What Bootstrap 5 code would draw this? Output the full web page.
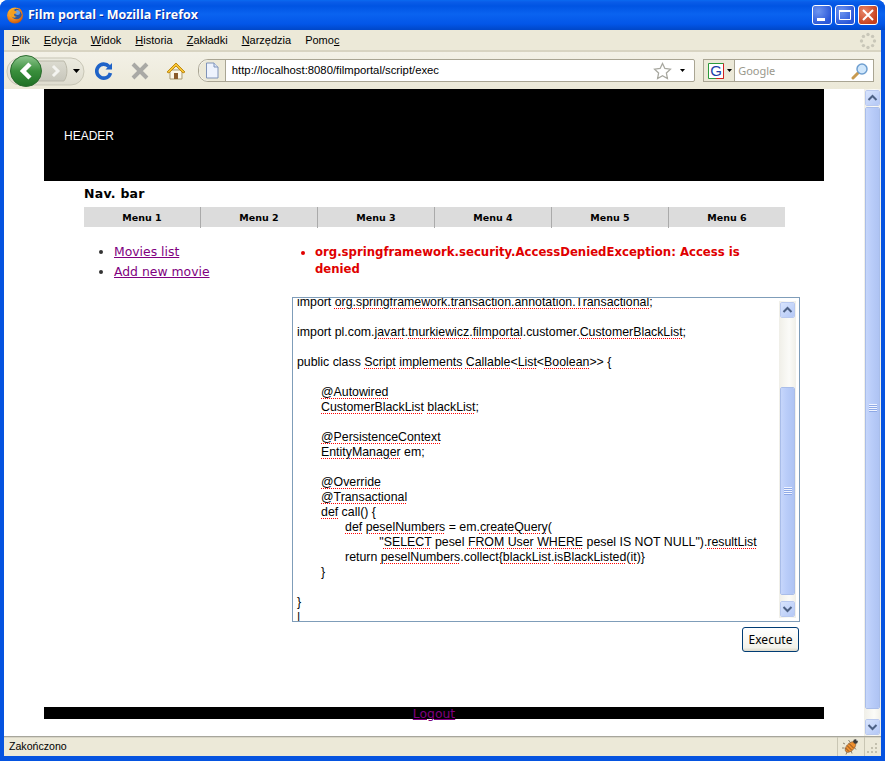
<!DOCTYPE html>
<html lang="pl">
<head>
<meta charset="utf-8">
<title>Film portal - Mozilla Firefox</title>
<link href="https://cdn.jsdelivr.net/npm/bootstrap@5.3.0/dist/css/bootstrap.min.css" rel="stylesheet">
<style>
html,body{margin:0;height:761px;overflow:hidden;background:#fff}
.xp-win{width:885px;height:761px;display:flex;flex-direction:column;background:#0553e0;border-radius:8px 8px 0 0;padding:0 4px 5px;overflow:hidden}
.xp-title{height:30px;margin:0 -4px;padding:0 7px 0 6px;flex:none;background:linear-gradient(#0a6af0 0,#0a5ce8 2px,#0054e3 6px,#0a63f0 14px,#0356e8 24px,#0047c8 30px);color:#fff;font:700 12.5px/30px "Open Sans","Liberation Sans",sans-serif;text-shadow:1px 1px 0 #0a2a9c}
.xp-wbtn{width:20px;height:20px;border:1px solid #fff;border-radius:3px;background:radial-gradient(circle at 30% 30%,#6f96f0,#2a57d8 75%);margin-left:3px}
.xp-wbtn.xp-x{background:radial-gradient(circle at 30% 30%,#e8876a,#c63f1c 75%)}
.xp-menu{height:22px;flex:none;background:#ece9d8;border-bottom:2px solid #d8d4c2;padding-left:8px;font:11px/21px "Liberation Sans",sans-serif;color:#000;gap:14px}
.xp-menu .xp-mi{padding:0}
.xp-menu u{text-decoration-thickness:1px}
.xp-tool{height:37px;flex:none;background:linear-gradient(#f3f1e7,#ece9d8);padding:0 7px 0 2px}
.xp-url,.xp-search{height:23px;background:#fff;border:1px solid #a9a593;font:11px/21px "Liberation Sans",sans-serif}
.xp-url{width:498px;margin-left:12px;border-radius:10px 2px 2px 10px}
.xp-url .xp-page{width:27px;height:21px;flex:none;background:#ece9d8;border-right:1px solid #a9a593;border-radius:10px 0 0 10px}
.xp-url .xp-addr{padding-left:6px;font-size:11.3px;color:#000}
.xp-search{width:171px;margin-left:8px}
.xp-search .xp-eng{width:31px;height:21px;flex:none;background:#ece9d8;border-right:1px solid #a9a593}
.xp-search .xp-hint{padding-left:3px;color:#9a988c;font:11px/21px "Noto Sans",sans-serif}
.xp-body{flex:1;min-height:0;background:#fff}
.xp-page-view{flex:1;min-width:0;overflow:hidden}
.xp-sb{width:17px;flex:none;background:linear-gradient(90deg,#f0efe8,#fbfbf8 60%,#f0efe8)}
.xp-sb-btn{height:16px;margin:1px;background:linear-gradient(135deg,#d8e4fd,#b4c8f6);border:1px solid #fff;border-radius:2px;outline:1px solid #b9c9ef;outline-offset:-1px}
.xp-sb-thumb{background:linear-gradient(90deg,#c6d6fb,#bacdf9 40%,#aec3f3);border:1px solid #fff;outline:1px solid #a9bde9;outline-offset:-1px;border-radius:2px;margin:0 1px}
.xp-sb-gap{height:9px}
.xp-grip{width:8px;height:8px;background:repeating-linear-gradient(#f0f4ff 0,#f0f4ff 1px,#8ea9e6 1px,#8ea9e6 2px)}
.xp-status{height:20px;flex:none;background:#ece9d8;border-top:1px solid #a7a69c;box-shadow:inset 0 1px 0 #d8d5c6;font:10.6px/19px "Liberation Sans",sans-serif;color:#000;padding-left:5px}
.xp-sep{width:27px;height:19px;border-left:1px solid #c9c6b4;flex:none}
.xp-sgrip{width:17px;height:19px;border-left:1px solid #c9c6b4;flex:none}
.fp-wrap{width:780px;margin:0 auto;font-family:"DejaVu Sans",sans-serif;color:#000}
.fp-head{height:92px;background:#000;color:#fff;padding-left:20px;font:12px/94px "Liberation Sans",sans-serif}
.fp-inner{padding:0 39px 0 40px}
.fp-navt{height:26px;font:700 12.5px/25px "DejaVu Sans",sans-serif;letter-spacing:.25px;margin:0}
.fp-menu{height:20px;background:#dcdcdc;font:700 9.5px/21px "DejaVu Sans",sans-serif;text-align:center}
.fp-menu .fp-mi{flex:1 1 0;border-right:1px solid #aaa;color:#000;padding:0}
.fp-menu .fp-mi:last-child{border-right:0}
.fp-main{margin-top:15px}
.fp-left{width:208px;flex:none}
.fp-links{margin:0;padding-left:30px;font-size:12.4px;line-height:20px;color:#333}
.fp-links a{color:#800080}
.fp-right{width:508px;flex:none}
.fp-err{margin:2px 0 19px;padding-left:23px;color:#e00000;font:700 11.7px/17px "DejaVu Sans",sans-serif;width:460px}
.fp-ta{height:325px;border:1px solid #7f9db9;background:#fff;overflow:hidden}
.fp-code{flex:1;min-width:0;overflow:hidden;padding-left:4px}
.fp-code pre{margin:-3px 0 0;font:12.35px/15px "Liberation Sans",sans-serif;color:#000;tab-size:7;overflow:visible;white-space:pre}
.sp{text-decoration:underline dotted #f00 1px;text-underline-offset:2px}
.fp-tsb{width:17px;flex:none;margin:3px 3px 3px 0;background:linear-gradient(90deg,#f0efe8,#fbfbf8 60%,#f0efe8)}
.fp-gap1{height:68px}
.fp-gap2{height:5px}
.fp-act{margin-top:5px;padding-right:1px}
.btn.fp-exec{width:57px;height:25px;padding:0;font:12px/23px "Noto Sans","Liberation Sans",sans-serif;color:#000;background:linear-gradient(#fff,#f3f2ea 85%,#dcd8c8);border:1px solid #003c74;border-radius:3px}
.fp-foot{height:12px;background:#000;margin-top:55px;text-align:center;font-size:12.4px;line-height:13px}
.fp-foot a{color:#800080}
</style>
</head>
<body>
<div class="xp-win">
  <div class="xp-title d-flex align-items-center">
    <svg width="18" height="18" viewBox="0 0 18 18" class="flex-none me-1"><defs><radialGradient id="fx" cx=".4" cy=".3" r=".8"><stop offset="0" stop-color="#ffd23c"/><stop offset=".6" stop-color="#f0841a"/><stop offset="1" stop-color="#b8480c"/></radialGradient></defs><circle cx="9" cy="9.500" r="8" fill="url(#fx)"/><circle cx="10.500" cy="8" r="5.300" fill="#2c5aa6"/><circle cx="11.500" cy="6.500" r="2.500" fill="#6fa0dc"/><path d="M3 8c1-3 3-5 6-5.500-1 1-1 2 0 2.500 1.500 0 2 1 1.500 2-1 .5-2 .5-2.500 1.500 0 1.500 1.500 2.500 3 2-1.500 1.500-4 1.500-5.500 0C4.500 9.500 4 8.500 3 8Z" fill="#f5a020"/><path d="M13 2c2.500 1.500 3.500 4 3 6.500-.8-1.500-1.500-3-3.500-4z" fill="#e87a14"/></svg>
    <span class="flex-grow-1">Film portal - Mozilla Firefox</span>
    <span class="xp-wbtn d-flex align-items-end justify-content-start"><svg width="18" height="18"><rect x="4" y="12" width="8" height="3" fill="#fff"/></svg></span>
    <span class="xp-wbtn d-flex"><svg width="18" height="18"><path d="M3.500 4.500h11v9h-11z" fill="none" stroke="#fff"/><path d="M3 4h12v2H3z" fill="#fff"/></svg></span>
    <span class="xp-wbtn xp-x d-flex"><svg width="18" height="18"><path d="M4 4l10 10M14 4L4 14" stroke="#fff" stroke-width="2"/></svg></span>
  </div>
  <nav class="xp-menu nav">
    <a class="xp-mi nav-link text-black" href="#"><u>P</u>lik</a>
    <a class="xp-mi nav-link text-black" href="#"><u>E</u>dycja</a>
    <a class="xp-mi nav-link text-black" href="#"><u>W</u>idok</a>
    <a class="xp-mi nav-link text-black" href="#"><u>H</u>istoria</a>
    <a class="xp-mi nav-link text-black" href="#"><u>Z</u>akładki</a>
    <a class="xp-mi nav-link text-black" href="#"><u>N</u>arzędzia</a>
    <a class="xp-mi nav-link text-black" href="#">Pomo<u>c</u></a>
    <span class="ms-auto me-1 align-self-center d-flex"><svg width="18" height="18" viewBox="0 0 18 18" fill="#c9c7b9"><circle cx="9" cy="2.500" r="1.700"/><circle cx="13.600" cy="4.400" r="1.700"/><circle cx="15.500" cy="9" r="1.700"/><circle cx="13.600" cy="13.600" r="1.700"/><circle cx="9" cy="15.500" r="1.700"/><circle cx="4.400" cy="13.600" r="1.700"/><circle cx="2.500" cy="9" r="1.700"/><circle cx="4.400" cy="4.400" r="1.700"/></svg></span>
  </nav>
  <div class="xp-tool d-flex align-items-center">
    <svg width="80" height="34" viewBox="0 0 80 34" class="flex-none">
      <defs><linearGradient id="g1" x1="0" y1="0" x2="0" y2="1"><stop offset="0" stop-color="#8fc78f"/><stop offset=".5" stop-color="#3a8f3c"/><stop offset="1" stop-color="#1e7024"/></linearGradient>
      <linearGradient id="g2" x1="0" y1="0" x2="0" y2="1"><stop offset="0" stop-color="#dcdbd0"/><stop offset="1" stop-color="#c8c7bc"/></linearGradient>
      <linearGradient id="g3" x1="0" y1="0" x2="0" y2="1"><stop offset="0" stop-color="#ecebe0"/><stop offset="1" stop-color="#dedcce"/></linearGradient></defs>
      <rect x="1" y="4" width="77" height="27" rx="13" fill="url(#g3)" stroke="#c8c6b6"/>
      <path d="M30 7h28c4 5 4 15 0 20H30z" fill="url(#g2)" stroke="#bbb9aa"/>
      <circle cx="20" cy="17" r="15.500" fill="url(#g1)" stroke="#2a6a2e"/>
      <path d="M24 10l-7 7 7 7" fill="none" stroke="#fff" stroke-width="4.500"/>
      <path d="M47 12l5 5-5 5" fill="none" stroke="#f4f4f0" stroke-width="3"/>
      <path d="M67 15h7l-3.500 4z" fill="#000"/>
    </svg>
    <svg width="20" height="20" viewBox="0 0 20 20" class="flex-none ms-2"><path d="M15 5.500A7 7 0 1 0 16.500 12" fill="none" stroke="#1f63c8" stroke-width="3.600"/><path d="M11.500 8.500h6.500V2z" fill="#1f63c8"/></svg>
    <svg width="20" height="20" viewBox="0 0 20 20" class="flex-none ms-3"><path d="M3 3l14 14M17 3L3 17" stroke="#a9a9a5" stroke-width="4"/></svg>
    <svg width="20" height="20" viewBox="0 0 20 20" class="flex-none ms-3"><path d="M4 9v9h12V9z" fill="#fbf7ea" stroke="#a89a70"/><path d="M1 11l9-9 9 9-2 1-7-7-7 7z" fill="#f7c534" stroke="#c08a14"/><rect x="8" y="12" width="4" height="6" fill="#8a5a2a"/></svg>
    <div class="xp-url d-flex align-items-center">
      <span class="xp-page d-flex align-items-center justify-content-center"><svg width="14" height="17" viewBox="0 0 14 17"><path d="M1.500 1h7.500l4 4v11H1.500z" fill="#eef3fd" stroke="#7f93b8"/><path d="M9 1v4h4" fill="#dbe5f7" stroke="#7f93b8"/></svg></span>
      <span class="xp-addr flex-grow-1">http://localhost:8080/filmportal/script/exec</span>
      <svg width="19" height="18" viewBox="0 0 19 18" class="flex-none"><path d="M9.500 1.500l2.400 5 5.500.7-4 3.800 1 5.500-4.900-2.700-4.900 2.700 1-5.500-4-3.800 5.500-.7z" fill="#fff" stroke="#a8a8a0" stroke-width="1.300"/></svg>
      <svg width="22" height="8" viewBox="0 0 22 8" class="flex-none"><path d="M8 2h5l-2.500 3z" fill="#000"/></svg>
    </div>
    <div class="xp-search d-flex align-items-center">
      <span class="xp-eng d-flex align-items-center ps-1"><svg width="16" height="16" viewBox="0 0 16 16"><path d="M.500.500h15v15H.500z" fill="#fff" stroke="#2a9a3a"/><path d="M15.500.500v15H8" fill="none" stroke="#d02020"/><text x="8" y="13" text-anchor="middle" font-family="Liberation Sans" font-size="15" fill="#1a3ea8">G</text></svg><svg width="10" height="8" viewBox="0 0 10 8"><path d="M3 2h5L5.500 5z" fill="#000"/></svg></span>
      <span class="xp-hint flex-grow-1">Google</span>
      <svg width="18" height="18" viewBox="0 0 18 18" class="flex-none me-1"><path d="M2 16l5-5" stroke="#c89a50" stroke-width="3" stroke-linecap="round"/><circle cx="11" cy="7" r="5" fill="#cfe6fb" stroke="#6f9fd0" stroke-width="1.500"/></svg>
    </div>
  </div>
  <div class="xp-body d-flex">
    <div class="xp-page-view">
      <div class="fp-wrap">
        <div class="fp-head">HEADER</div>
        <div class="fp-inner">
          <h1 class="fp-navt">Nav. bar</h1>
          <nav class="fp-menu nav">
            <a class="fp-mi nav-link" href="#">Menu 1</a>
            <a class="fp-mi nav-link" href="#">Menu 2</a>
            <a class="fp-mi nav-link" href="#">Menu 3</a>
            <a class="fp-mi nav-link" href="#">Menu 4</a>
            <a class="fp-mi nav-link" href="#">Menu 5</a>
            <a class="fp-mi nav-link" href="#">Menu 6</a>
          </nav>
          <div class="fp-main d-flex">
            <div class="fp-left">
              <ul class="fp-links">
                <li><a href="#">Movies list</a></li>
                <li><a href="#">Add new movie</a></li>
              </ul>
            </div>
            <div class="fp-right">
              <ul class="fp-err"><li>org.springframework.security.AccessDeniedException: Access is denied</li></ul>
              <div class="fp-ta d-flex">
                <div class="fp-code"><pre>import <span class="sp">org.springframework.transaction.annotation.Transactional</span>;

import pl.com.<span class="sp">javart</span>.<span class="sp">tnurkiewicz</span>.<span class="sp">filmportal</span>.customer.<span class="sp">CustomerBlackList</span>;

public class <span class="sp">Script</span> <span class="sp">implements</span> <span class="sp">Callable</span>&lt;<span class="sp">List</span>&lt;<span class="sp">Boolean</span>&gt;&gt; {

&#9;<span class="sp">@Autowired</span>
&#9;<span class="sp">CustomerBlackList</span> <span class="sp">blackList</span>;

&#9;<span class="sp">@PersistenceContext</span>
&#9;<span class="sp">EntityManager</span> em;

&#9;<span class="sp">@Override</span>
&#9;<span class="sp">@Transactional</span>
&#9;<span class="sp">def</span> call() {
&#9;&#9;<span class="sp">def</span> <span class="sp">peselNumbers</span> = em.<span class="sp">createQuery</span>(
&#9;&#9;&#9;   "<span class="sp">SELECT</span> pesel <span class="sp">FROM</span> <span class="sp">User</span> <span class="sp">WHERE</span> pesel IS NOT NULL").<span class="sp">resultList</span>
&#9;&#9;return <span class="sp">peselNumbers</span>.collect{<span class="sp">blackList</span>.<span class="sp">isBlackListed</span>(<span class="sp">it</span>)}
&#9;}

}
|</pre></div>
                <div class="fp-tsb d-flex flex-column">
                  <div class="xp-sb-btn d-flex align-items-center justify-content-center flex-none"><svg width="11" height="8" viewBox="0 0 11 8"><path d="M1.500 6l4-4 4 4" fill="none" stroke="#4d6185" stroke-width="2"/></svg></div>
                  <div class="fp-gap1"></div>
                  <div class="xp-sb-thumb flex-grow-1 d-flex align-items-center justify-content-center"><div class="xp-grip"></div></div>
                  <div class="fp-gap2"></div>
                  <div class="xp-sb-btn d-flex align-items-center justify-content-center flex-none"><svg width="11" height="8" viewBox="0 0 11 8"><path d="M1.500 2l4 4 4-4" fill="none" stroke="#4d6185" stroke-width="2"/></svg></div>
                </div>
              </div>
              <div class="fp-act d-flex justify-content-end"><button type="button" class="btn fp-exec">Execute</button></div>
            </div>
          </div>
        </div>
        <div class="fp-foot"><a href="#">Logout</a></div>
      </div>
    </div>
    <div class="xp-sb d-flex flex-column">
      <div class="xp-sb-btn d-flex align-items-center justify-content-center flex-none"><svg width="11" height="8" viewBox="0 0 11 8"><path d="M1.500 6l4-4 4 4" fill="none" stroke="#4d6185" stroke-width="2"/></svg></div>
      <div class="xp-sb-thumb flex-grow-1 d-flex align-items-center justify-content-center"><div class="xp-grip"></div></div>
      <div class="flex-none xp-sb-gap"></div>
      <div class="xp-sb-btn d-flex align-items-center justify-content-center flex-none"><svg width="11" height="8" viewBox="0 0 11 8"><path d="M1.500 2l4 4 4-4" fill="none" stroke="#4d6185" stroke-width="2"/></svg></div>
    </div>
  </div>
  <div class="xp-status d-flex align-items-center">
    <span class="flex-grow-1">Zakończono</span>
    <span class="xp-sep d-flex align-items-center justify-content-center"><svg width="18" height="17" viewBox="0 0 18 17"><path d="M3 6L1 5M2.500 10H0M5 14l-1 2.500M8 4L6.500 2M12 9l2 2.500M9 12.500l1 3" stroke="#8a8270"/><ellipse cx="8.500" cy="9" rx="6.500" ry="3.700" transform="rotate(-45 8.500 9)" fill="#ef8f2e" stroke="#8a5a30" stroke-width=".7"/><path d="M5 7.500l4.500 4.500M7 5.500l4.500 4.500M3.500 10l3.500 3.500" stroke="#7a4a1e" stroke-width=".9"/><circle cx="13.500" cy="3.500" r="2.300" fill="#3a3a3a"/><circle cx="15" cy="2" r=".8" fill="#fff"/></svg></span>
    <span class="xp-sgrip d-flex"><svg width="16" height="19" viewBox="0 0 16 19" fill="#c3c0ae"><rect x="10" y="6" width="2" height="2"/><rect x="6" y="10" width="2" height="2"/><rect x="10" y="10" width="2" height="2"/><rect x="2" y="14" width="2" height="2"/><rect x="6" y="14" width="2" height="2"/><rect x="10" y="14" width="2" height="2"/></svg></span>
  </div>
</div>
<script src="https://cdn.jsdelivr.net/npm/bootstrap@5.3.0/dist/js/bootstrap.bundle.min.js"></script>
</body>
</html>
